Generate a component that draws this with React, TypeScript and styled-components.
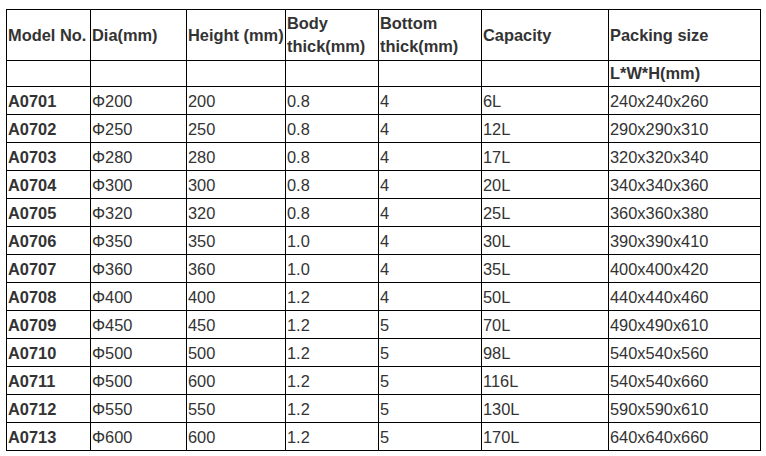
import React from 'react';
import styled, { createGlobalStyle } from 'styled-components';

const GlobalStyle = createGlobalStyle`
    body {
        margin: 0;
        background: #ffffff;
        font-family: "Liberation Sans", Arial, sans-serif;
    }
`;

const Wrapper = styled.div`
    padding: 9px 0 0 6px;
`;

const Table = styled.table`
    border-collapse: collapse;
    table-layout: fixed;
    width: 754px;
    color: #333333;
    font-size: 16.4px;
`;

const HeadCell = styled.td<{ $tall?: boolean }>`
    border: 1px solid #000;
    padding: 0 1px;
    height: ${(p) => (p.$tall ? '50px' : '25px')};
    line-height: 23px;
    font-weight: bold;
    vertical-align: middle;
`;

const Cell = styled.td<{ $bold?: boolean }>`
    border: 1px solid #000;
    padding: 0 1px;
    height: 27px;
    line-height: 20px;
    font-weight: ${(p) => (p.$bold ? 'bold' : 'normal')};
    vertical-align: middle;
`;

const widths = [84, 96, 99, 93, 103, 127, 152];

const headers = ['Model No.', 'Dia(mm)', 'Height (mm)', 'Body thick(mm)', 'Bottom thick(mm)', 'Capacity', 'Packing size'];

const rows: string[][] = [
    ['A0701', 'Φ200', '200', '0.8', '4', '6L', '240x240x260'],
    ['A0702', 'Φ250', '250', '0.8', '4', '12L', '290x290x310'],
    ['A0703', 'Φ280', '280', '0.8', '4', '17L', '320x320x340'],
    ['A0704', 'Φ300', '300', '0.8', '4', '20L', '340x340x360'],
    ['A0705', 'Φ320', '320', '0.8', '4', '25L', '360x360x380'],
    ['A0706', 'Φ350', '350', '1.0', '4', '30L', '390x390x410'],
    ['A0707', 'Φ360', '360', '1.0', '4', '35L', '400x400x420'],
    ['A0708', 'Φ400', '400', '1.2', '4', '50L', '440x440x460'],
    ['A0709', 'Φ450', '450', '1.2', '5', '70L', '490x490x610'],
    ['A0710', 'Φ500', '500', '1.2', '5', '98L', '540x540x560'],
    ['A0711', 'Φ500', '600', '1.2', '5', '116L', '540x540x660'],
    ['A0712', 'Φ550', '550', '1.2', '5', '130L', '590x590x610'],
    ['A0713', 'Φ600', '600', '1.2', '5', '170L', '640x640x660'],
];

const App: React.FC = () => {
    return (
        <Wrapper>
            <GlobalStyle />
            <Table>
                <colgroup>
                    {widths.map((w, i) => <col key={i} style={{ width: w }} />)}
                </colgroup>
                <tbody>
                    <tr>
                        {headers.map((h) => <HeadCell $tall key={h}>{h}</HeadCell>)}
                    </tr>
                    <tr>
                        {headers.map((h, i) => (
                            <HeadCell key={h}>{i === 6 ? 'L*W*H(mm)' : ''}</HeadCell>
                        ))}
                    </tr>
                    {rows.map((r) => (
                        <tr key={r[0]}>
                            {r.map((c, i) => <Cell $bold={i === 0} key={i}>{c}</Cell>)}
                        </tr>
                    ))}
                </tbody>
            </Table>
        </Wrapper>
    );
};

export default App;
